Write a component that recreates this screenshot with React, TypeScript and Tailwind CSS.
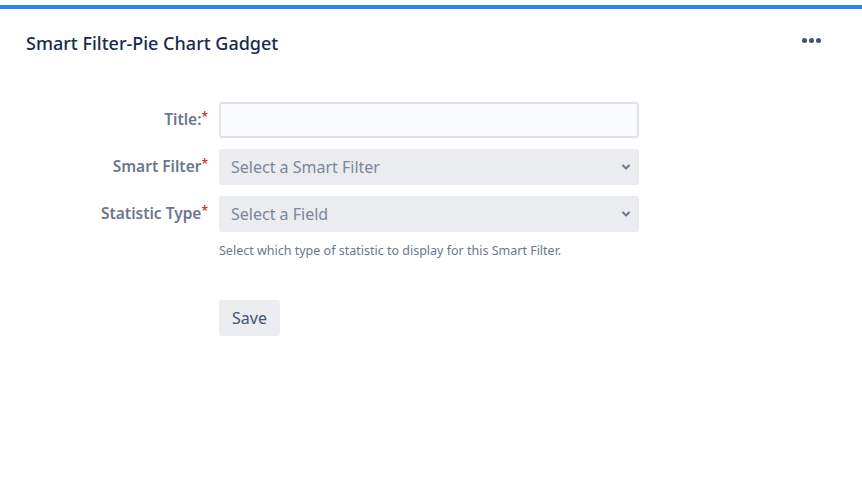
import React from 'react';

function Chevron() {
  return (
    <svg width="10" height="10" viewBox="0 0 10 10" className="text-[#6b778c]">
      <path d="M2 3.5 L5 6.5 L8 3.5" fill="none" stroke="currentColor" strokeWidth="2" strokeLinecap="round" strokeLinejoin="round" />
    </svg>
  );
}

function Label({ text }: { text: string }) {
  return (
    <label className="w-[208px] text-right text-[15.5px] font-semibold text-[#6b778c]">
      {text}
      <span className="text-[#de350b] text-[12px] align-top leading-[18px]">*</span>
    </label>
  );
}

export default function App() {
  return (
    <div className="h-[492px] w-[862px] bg-white" style={{ fontFamily: '"Noto Sans", "Open Sans", sans-serif' }}>
      <div className="mt-[5px] border-t-4 border-[#2684ff]">
        {/* header */}
        <div className="flex items-center justify-between pl-[26px] pr-[41px] pt-[20px]">
          <h1 className="text-[18px] font-medium text-[#172b4d] leading-[28px]">Smart Filter-Pie Chart Gadget</h1>
          <div className="flex gap-[2px] -mt-[6px]">
            <span className="h-[5px] w-[5px] rounded-full bg-[#42526e]" />
            <span className="h-[5px] w-[5px] rounded-full bg-[#42526e]" />
            <span className="h-[5px] w-[5px] rounded-full bg-[#42526e]" />
          </div>
        </div>

        {/* form */}
        <div className="mt-[45px] flex flex-col gap-[11px]">
          <div className="flex items-center gap-[11px]">
            <Label text="Title:" />
            <input
              type="text"
              className="h-[36px] w-[420px] rounded-[3px] border-2 border-[#dfe1e6] bg-[#fafbfc] px-[10px] text-[16px] outline-none"
            />
          </div>
          <div className="flex items-center gap-[11px]">
            <Label text="Smart Filter" />
            <div className="flex h-[36px] w-[420px] items-center justify-between rounded-[3px] bg-[#ebecf0] pl-[12px] pr-[8px] text-[16px] text-[#7a869a]">
              <span>Select a Smart Filter</span>
              <Chevron />
            </div>
          </div>
          <div className="flex items-start gap-[11px]">
            <div className="flex h-[36px] items-center">
              <Label text="Statistic Type" />
            </div>
            <div className="flex flex-col">
              <div className="flex h-[36px] w-[420px] items-center justify-between rounded-[3px] bg-[#ebecf0] pl-[12px] pr-[8px] text-[16px] text-[#7a869a]">
                <span>Select a Field</span>
                <Chevron />
              </div>
              <p className="mt-[10px] text-[12.5px] text-[#6b778c]">Select which type of statistic to display for this Smart Filter.</p>
            </div>
          </div>
          <div className="ml-[219px] mt-[28px]">
            <button className="h-[36px] rounded-[3px] bg-[#ebecf0] px-[13px] text-[16px] text-[#42526e]">Save</button>
          </div>
        </div>
      </div>
    </div>
  );
}
